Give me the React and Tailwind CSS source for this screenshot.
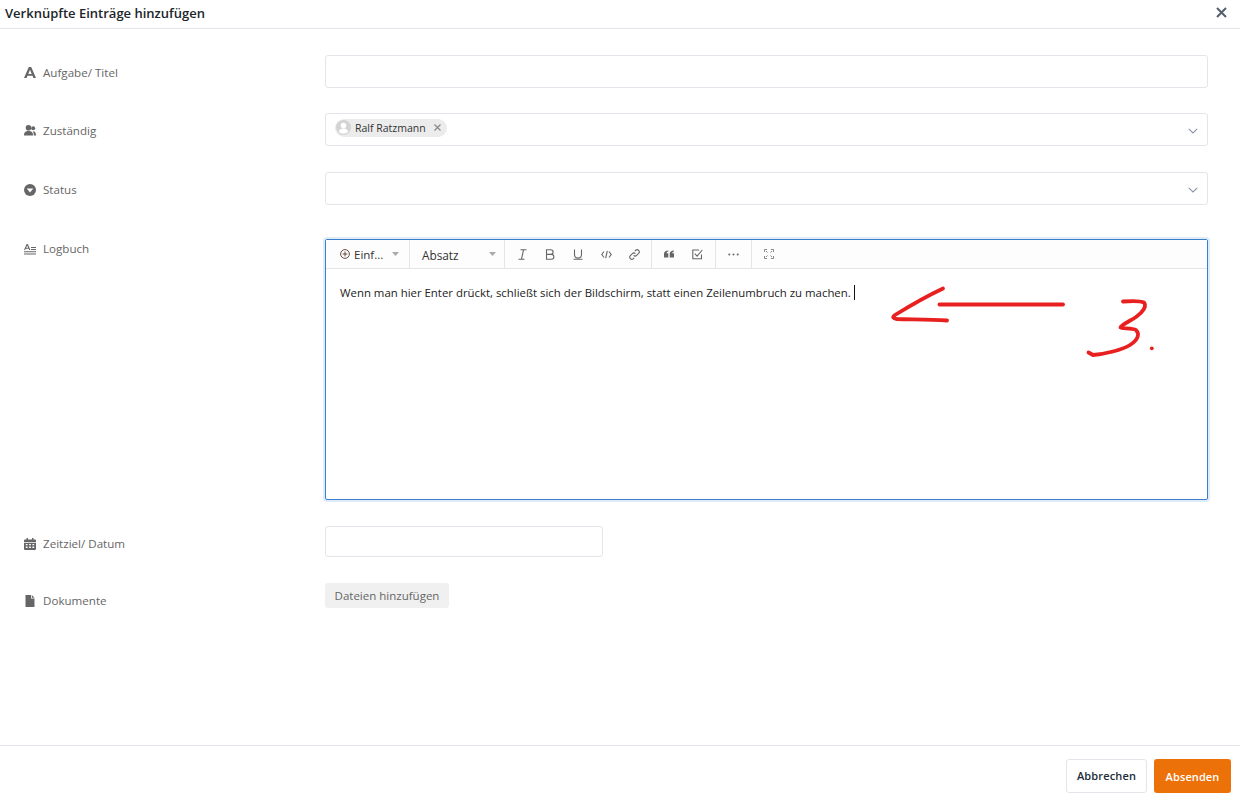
import React from "react";

const Label = ({ icon, children, className = "" }) => (
  <div className={`w-[325px] shrink-0 flex items-center gap-[7px] pl-6 text-[11.6px] leading-4 text-[#666] ${className}`}>
    <span className="w-3 h-3 flex items-center justify-center shrink-0">{icon}</span>
    <span>{children}</span>
  </div>
);

const Chevron = () => (
  <svg className="mt-[2px]" width="10" height="6" viewBox="0 0 10 6" fill="none" stroke="#8a94a6" strokeWidth="1.1"><path d="M0.8 0.8 5 5 9.2 0.8" /></svg>
);

const Caret = () => (
  <svg width="7" height="4" viewBox="0 0 7 4" fill="#aaa"><path d="M0 0h7L3.5 4z" /></svg>
);

const Sep = () => <div className="w-px self-stretch bg-[#e5e5e5]" />;

const Tool = ({ children, className = "" }) => (
  <span className={`w-7 h-full flex items-center justify-center ${className}`}>{children}</span>
);

const stroke = { fill: "none", stroke: "#666", strokeWidth: 1.1 };

export default function App() {
  return (
    <div className="relative w-[1240px] h-[804px] bg-white flex flex-col overflow-hidden font-['Open_Sans','Noto_Sans',sans-serif]">
      <header className="h-[29px] shrink-0 border-b border-[#e3e5ea] flex items-start justify-between pl-[5px] pr-[13px]">
        <h1 className="text-[13px] leading-[26px] font-semibold text-[#212529]">Verknüpfte Einträge hinzufügen</h1>
        <svg className="mt-[7px]" width="11" height="11" viewBox="0 0 11 11" stroke="#555f6e" strokeWidth="2"><path d="M1 1l9 9M10 1l-9 9" /></svg>
      </header>

      <main className="flex-1 flex flex-col pt-[26px]">
        <div className="flex h-[33px] items-center">
          <Label className="mt-[2px]" icon={<svg width="12" height="11" viewBox="0 0 12 11" fill="#666"><path d="M4.8 0h2.4L12 11H9.4l-.9-2.2H3.5L2.6 11H0zM6 2.8 4.3 6.900h3.400z" /></svg>}>Aufgabe/ Titel</Label>
          <div className="w-[883px] h-[33px] border border-[#e3e5ea] rounded-[3px]" />
        </div>

        <div className="flex h-[33px] items-center mt-[25px]">
          <Label className="mt-[2px]" icon={<svg width="12" height="11" viewBox="0 0 12 11" fill="#666"><circle cx="4.5" cy="2.800" r="2.800" /><path d="M0 10.500C0 7 1.800 6 4.500 6S9 7 9 10.500z" /><circle cx="9.200" cy="3.200" r="2" /><path d="M9.800 10.500H12c0-2.800-1-4.200-3.200-4.200 0 0 1 1.400 1 4.200z" /></svg>}>Zuständig</Label>
          <div className="w-[883px] h-[33px] border border-[#e3e5ea] rounded-[3px] flex items-center justify-between pl-[9px] pr-[9px]">
            <div className="h-[18px] -mt-[4px] rounded-full bg-[#ececec] flex items-center pl-px pr-[6px]">
              <svg width="15" height="15" viewBox="0 0 15 15"><circle cx="7.5" cy="7.5" r="7.5" fill="#d3d3d3" /><circle cx="7.5" cy="5.600" r="2.800" fill="#fff" /><path d="M2.800 12c.4-2.400 2.300-3.400 4.700-3.400s4.300 1 4.700 3.400a7 7 0 0 1-9.400 0z" fill="#fff" /></svg>
              <span className="ml-[4px] text-[10.500px] text-[#333] leading-4">Ralf Ratzmann</span>
              <svg className="ml-[8px]" width="7" height="7" viewBox="0 0 7 7" stroke="#888" strokeWidth="1.200"><path d="M.5.5l6 6M6.500.5l-6 6" /></svg>
            </div>
            <Chevron />
          </div>
        </div>

        <div className="flex h-[33px] items-center mt-[26px]">
          <Label className="mt-[2px]" icon={<svg width="12" height="12" viewBox="0 0 12 12"><circle cx="6" cy="6" r="6" fill="#666" /><path d="M2.700 4.400h6.600L6 8.600z" fill="#fff" /></svg>}>Status</Label>
          <div className="w-[883px] h-[33px] border border-[#e3e5ea] rounded-[3px] flex items-center justify-end pr-[9px]">
            <Chevron />
          </div>
        </div>

        <div className="flex items-start mt-[34px]">
          <Label className="h-[20px]" icon={<svg width="12" height="11" viewBox="0 0 12 11" fill="#666"><path d="M2.600 0h1.200L6.400 6H5.200l-.5-1.300H1.700L1.200 6H0zM3.200 1.500 2.100 3.800h2.100z" /><path d="M7 3h5v1H7zM7 5h5v1H7zM0 7.300h12v1H0zM0 9.500h12v1H0z" /></svg>}>Logbuch</Label>
          <div className="w-[883px] h-[261px] border border-[#3b7fcc] rounded-[2px] shadow-[0_0_0_2px_rgba(160,200,240,0.35)] flex flex-col">
            <div className="h-[29px] shrink-0 border-b border-[#e5e5e5] flex items-center text-[#333] bg-[#fdfdfd]">
              <div className="w-[83px] h-full flex items-center pl-[14px]">
                <svg width="10" height="10" viewBox="0 0 10 10" fill="none" stroke="#5c3a2e" strokeWidth="0.9"><circle cx="5" cy="5" r="4.400" /><path d="M5 2.600v4.800M2.600 5h4.800" /></svg>
                <span className="ml-[4px] pt-px text-[11.500px] leading-4">Einf...</span>
                <span className="ml-[9px] flex"><Caret /></span>
              </div>
              <Sep />
              <div className="w-[94px] h-full flex items-center justify-between pl-[12px] pr-[8px]">
                <span className="pt-px text-[11.800px] leading-4">Absatz</span>
                <Caret />
              </div>
              <Sep />
              <div className="flex h-full w-[146px] items-center pl-[3px]">
                <Tool><svg width="11" height="11" viewBox="0 0 11 11" {...stroke}><path d="M3.500 .8h6M1.500 10.200h6M6.500 .8l-2 9.400" /></svg></Tool>
                <Tool><svg width="10" height="11" viewBox="0 0 10 11" {...stroke}><path d="M1.500 .8h4.300a2.300 2.300 0 0 1 0 4.600H1.500zM1.500 5.400h5a2.400 2.400 0 0 1 0 4.800h-5z" /></svg></Tool>
                <Tool><svg width="10" height="11" viewBox="0 0 10 11" {...stroke}><path d="M1.500 .5v5a3.500 3.500 0 0 0 7 0v-5M.5 10.300h9" /></svg></Tool>
                <Tool><svg width="11" height="9" viewBox="0 0 11 9" {...stroke}><path d="M3 1.500.8 4.500 3 7.500M8 1.500l2.200 3-2.200 3M6.300.8 4.700 8.200" /></svg></Tool>
                <Tool><svg width="11" height="11" viewBox="0 0 11 11" {...stroke}><path d="M4.600 6.400a2 2 0 0 0 3 0l2-2a2.100 2.100 0 0 0-3-3l-.8.8M6.400 4.600a2 2 0 0 0-3 0l-2 2a2.100 2.100 0 0 0 3 3l.8-.8" /></svg></Tool>
              </div>
              <Sep />
              <div className="flex h-full w-[63px] items-center pl-[3px]">
                <Tool><svg width="10" height="8" viewBox="0 0 10 8" fill="#666"><path d="M4.300.5v1C3 1.800 2.600 2.500 2.500 3.200h1.800V7.500H0V3.700C0 1.800 1.500.6 4.300.5zM10 .5v1c-1.300.3-1.700 1-1.800 1.700H10V7.500H5.700V3.700C5.700 1.800 7.200.6 10 .5z" /></svg></Tool>
                <Tool><svg width="11" height="11" viewBox="0 0 11 11" {...stroke}><path d="M9.500 5.500v4.200H.8V1h6.400" /><path d="M2.800 4.600l2.300 2.500L10.300 1" /></svg></Tool>
              </div>
              <Sep />
              <div className="w-[35px] h-full flex items-center justify-center">
                <svg width="11" height="3" viewBox="0 0 11 3" fill="#666"><circle cx="1.300" cy="1.500" r="1" /><circle cx="5.500" cy="1.500" r="1" /><circle cx="9.700" cy="1.500" r="1" /></svg>
              </div>
              <Sep />
              <div className="w-[34px] h-full flex items-center justify-center">
                <svg width="10" height="10" viewBox="0 0 10 10" fill="none" stroke="#888" strokeWidth="1"><path d="M.5 3V.5H3M7 .5h2.500V3M9.500 7v2.500H7M3 9.500H.5V7M3.500 3.500 2 2M6.500 3.500 8 2M6.500 6.500 8 8M3.500 6.500 2 8" /></svg>
              </div>
            </div>
            <div className="flex-1 pl-[14px] pt-[16px] text-[11.400px] leading-4 text-[#222]">
              Wenn man hier Enter drückt, schließt sich der Bildschirm, statt einen Zeilenumbruch zu machen.<span className="inline-block w-px h-[15px] bg-[#111] ml-[3px] align-[-3px]" />
            </div>
          </div>
        </div>

        <div className="flex h-[31px] items-center mt-[26px]">
          <Label className="mt-[4px]" icon={<svg width="12" height="12" viewBox="0 0 12 12" fill="#666"><path d="M2.500 0h1.500v1.500h4V0h1.500v1.500H11a1 1 0 0 1 1 1V4H0V2.500a1 1 0 0 1 1-1h1.500zM0 4.800h12V11a1 1 0 0 1-1 1H1a1 1 0 0 1-1-1zM1.800 6v1.300h1.800V6zm3.300 0v1.300h1.800V6zm3.300 0v1.300h1.800V6zM1.800 8.600v1.300h1.800V8.600zm3.300 0v1.300h1.800V8.600zm3.300 0v1.300h1.800V8.600z" /></svg>}>Zeitziel/ Datum</Label>
          <div className="w-[278px] h-[31px] border border-[#e3e5ea] rounded-[3px]" />
        </div>

        <div className="flex items-start mt-[26px]">
          <Label className="h-[35px]" icon={<svg width="10" height="12" viewBox="0 0 10 12" fill="#666"><path d="M.5 0H6v3.500h3.500V12H.5zM6.800 0l2.700 2.700H6.800z" /></svg>}>Dokumente</Label>
          <div className="w-[124px] h-[25px] rounded-[3px] bg-[#f0f0f0] flex items-center justify-center text-[11.500px] text-[#666]">Dateien hinzufügen</div>
        </div>
      </main>

      <footer className="h-[59px] shrink-0 border-t border-[#e3e5ea] flex items-start justify-end gap-[7px] pt-[13px] pr-[9px]">
        <button className="w-[81px] h-[34px] pt-px border border-[#e3e5ea] rounded-[3px] bg-white text-[11px] font-semibold tracking-[0.15px] text-[#212b3a]">Abbrechen</button>
        <button className="w-[77px] h-[34px] pt-[2px] rounded-[3px] bg-[#ed7109] text-[11px] font-semibold tracking-[0.1px] text-white">Absenden</button>
      </footer>

      <svg className="absolute left-[880px] top-[280px] pointer-events-none" width="290" height="85" viewBox="880 280 290 85" fill="none" stroke="#e8201f" strokeWidth="3.800" strokeLinecap="round" strokeLinejoin="round">
        <path d="M943 288.500C925 297 908 307 895 315C892 317 893 318.500 897 319C912 319.500 930 319 947 320.500" />
        <path d="M939.500 304.500H1063" />
        <path d="M1123 301.500C1130 301 1140 300.500 1144 302.500C1147 306 1143 312 1136 317C1130 321 1121 325 1120.500 327.500C1122 329 1132 327.500 1136 330C1140 334 1138 340 1130 345C1122 350 1105 354 1093 355L1088.500 352.500" />
        <circle cx="1151.800" cy="348.300" r="1.900" fill="#e8201f" stroke="none" />
      </svg>
    </div>
  );
}
